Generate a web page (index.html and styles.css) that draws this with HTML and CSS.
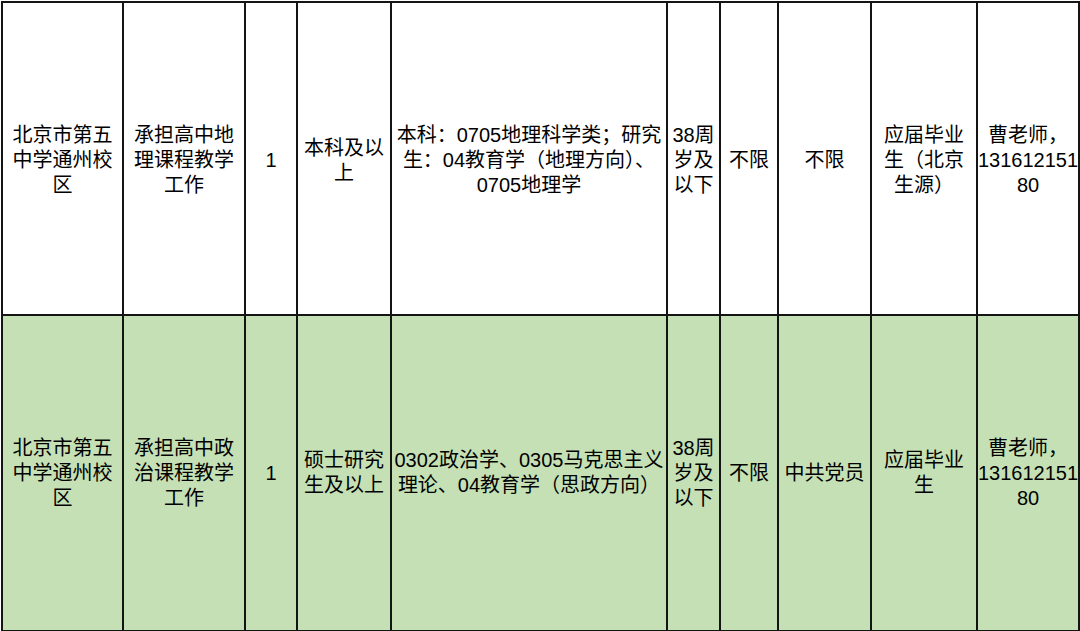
FILE: index.html
```html
<!DOCTYPE html>
<html lang="zh-CN">
<head>
<meta charset="utf-8">
<title>招聘岗位表</title>
<link rel="stylesheet" href="styles.css">
</head>
<body>
<table class="jobs">
  <colgroup>
    <col class="c1"><col class="c2"><col class="c3"><col class="c4"><col class="c5">
    <col class="c6"><col class="c7"><col class="c8"><col class="c9"><col class="c10">
  </colgroup>
  <tbody>
    <tr class="row-a">
      <td>北京市第五<br>中学通州校<br>区</td>
      <td>承担高中地<br>理课程教学<br>工作</td>
      <td>1</td>
      <td>本科及以<br>上</td>
      <td>本科：0705地理科学类；研究<br>生：04教育学（地理方向）、<br>0705地理学</td>
      <td>38周<br>岁及<br>以下</td>
      <td>不限</td>
      <td>不限</td>
      <td>应届毕业<br>生（北京<br>生源）</td>
      <td>曹老师，<br>131612151<br>80</td>
    </tr>
    <tr class="row-b">
      <td>北京市第五<br>中学通州校<br>区</td>
      <td>承担高中政<br>治课程教学<br>工作</td>
      <td>1</td>
      <td>硕士研究<br>生及以上</td>
      <td>0302政治学、0305马克思主义<br>理论、04教育学（思政方向）</td>
      <td>38周<br>岁及<br>以下</td>
      <td>不限</td>
      <td>中共党员</td>
      <td>应届毕业<br>生</td>
      <td>曹老师，<br>131612151<br>80</td>
    </tr>
  </tbody>
</table>
</body>
</html>
```

FILE: styles.css
```css
html, body {
  margin: 0;
  padding: 0;
  background: #ffffff;
}

.jobs {
  border-collapse: collapse;
  table-layout: fixed;
  width: 1079px;
  margin: 1px 0 0 1px;
  font-family: "Liberation Sans", "Noto Sans CJK SC", sans-serif;
  font-size: 20px;
  line-height: 25px;
  color: #000000;
}

.jobs td {
  border: 2px solid #141414;
  padding: 0;
  text-align: center;
  vertical-align: middle;
  white-space: nowrap;
  overflow: hidden;
}

.c1 { width: 121px; }
.c2 { width: 122px; }
.c3 { width: 52px; }
.c4 { width: 94px; }
.c5 { width: 276px; }
.c6 { width: 53px; }
.c7 { width: 58px; }
.c8 { width: 93px; }
.c9 { width: 106px; }
.c10 { width: 102px; }

.row-a td {
  height: 307px;
  padding-top: 4px;
  background: #ffffff;
}

.row-b td {
  height: 314px;
  background: #c5e0b4;
}
```
